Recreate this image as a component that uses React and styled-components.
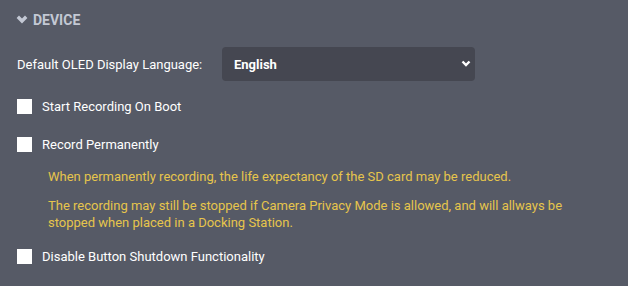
import React, { useState } from "react";
import styled, { createGlobalStyle } from "styled-components";

const GlobalStyle = createGlobalStyle`
  html, body {
    margin: 0;
    padding: 0;
    background: #565a66;
  }
  body {
    font-family: Roboto, "Liberation Sans", sans-serif;
  }
`;

const Panel = styled.div`
  width: 628px;
  height: 286px;
  background: #565a66;
  box-sizing: border-box;
  padding: 11px 0 0 17px;
`;

const Header = styled.div`
  display: flex;
  align-items: center;
  gap: 5px;
  color: #c3c8d4;
  font-weight: 700;
  font-size: 14px;
  text-transform: uppercase;
  margin-left: -1px;
  height: 17px;
`;

const Row = styled.div`
  display: flex;
  align-items: center;
  color: #ffffff;
  font-size: 13px;
`;

const SelectRow = styled(Row)`
  margin-top: 19px;
  height: 34px;
`;

const Label = styled.span`
  width: 205px;
`;

const SelectBox = styled.div`
  position: relative;
  width: 253px;
  height: 34px;
`;

const Select = styled.select`
  appearance: none;
  width: 100%;
  height: 100%;
  background: #454751;
  color: #ffffff;
  border: none;
  border-radius: 4px;
  padding: 0 0 0 12px;
  font-family: inherit;
  font-size: 13px;
  font-weight: 700;
  outline: none;
`;

const Caret = styled.svg`
  position: absolute;
  right: 4px;
  top: 13px;
  pointer-events: none;
`;

const CheckRow = styled(Row)`
  margin-top: ${(p) => p.$top}px;
  gap: 10px;
  height: 15px;
  cursor: pointer;
`;

const Box = styled.span`
  width: 15px;
  height: 15px;
  background: #ffffff;
  flex-shrink: 0;
`;

const Note = styled.p`
  margin: ${(p) => p.$top}px 0 0 31px;
  color: #e6c54c;
  font-size: 13px;
  line-height: 17px;
  width: 540px;
`;

function Check({ label, top }) {
  const [on, setOn] = useState(false);
  return (
    <CheckRow $top={top} onClick={() => setOn(!on)}>
      <Box />
      <span>{label}</span>
    </CheckRow>
  );
}

export default function App() {
  return (
    <>
      <GlobalStyle />
      <Panel>
        <Header>
          <svg width="12" height="9" viewBox="0 0 12 9">
            <path d="M1.8 1.8 L6 6 L10.2 1.8" stroke="#c3c8d4" strokeWidth="3.4" fill="none" />
          </svg>
          Device
        </Header>
        <SelectRow>
          <Label>Default OLED Display Language:</Label>
          <SelectBox>
            <Select defaultValue="en">
              <option value="en">English</option>
              <option value="de">Deutsch</option>
            </Select>
            <Caret width="10" height="8" viewBox="0 0 10 8">
              <path d="M1.5 1.5 L5 5 L8.5 1.5" stroke="#ffffff" strokeWidth="2.4" fill="none" />
            </Caret>
          </SelectBox>
        </SelectRow>
        <Check top={18} label="Start Recording On Boot" />
        <Check top={23} label="Record Permanently" />
        <Note $top={16}>
          When permanently recording, the life expectancy of the SD card may be reduced.
        </Note>
        <Note $top={12}>
          The recording may still be stopped if Camera Privacy Mode is allowed, and will allways be
          stopped when placed in a Docking Station.
        </Note>
        <Check top={18} label="Disable Button Shutdown Functionality" />
      </Panel>
    </>
  );
}
